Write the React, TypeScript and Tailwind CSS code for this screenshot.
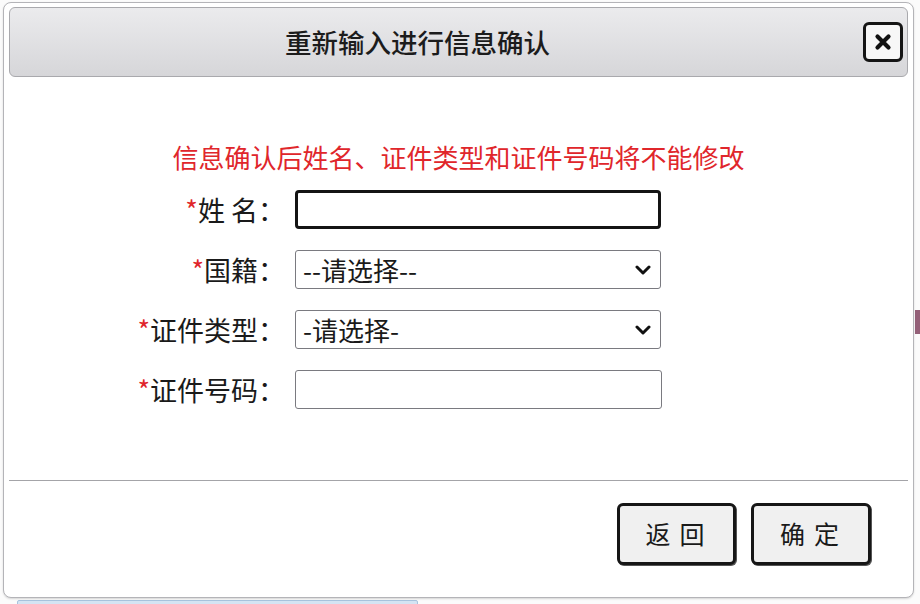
import { useState } from "react";

const font = { fontFamily: '"Microsoft YaHei", "Noto Sans CJK SC", "Noto Sans", sans-serif' };

function Chevron() {
  return (
    <svg width="16" height="12" viewBox="0 0 16 12" className="pointer-events-none absolute right-[9px] top-[13px]">
      <path d="M2 3 L8 9 L14 3" fill="none" stroke="#111" strokeWidth="3" strokeLinecap="round" strokeLinejoin="round" />
    </svg>
  );
}

function Label({ text }: { text: string }) {
  return (
    <div className="w-[276px] shrink-0 text-right text-[27px] leading-[39px] text-[#1a1a1a]">
      <span className="text-[#e0262b]">*</span>
      {text}
    </div>
  );
}

export default function App() {
  const [name, setName] = useState("");
  const [idNo, setIdNo] = useState("");

  return (
    <div className="relative h-[604px] w-[920px] overflow-hidden bg-[#fbfbfb]" style={font}>
      {/* sliver of the page behind the dialog */}
      <div className="absolute left-[915px] top-[310px] h-[24px] w-[5px] bg-[#7a3a58] opacity-80" />

      <div className="relative ml-[3px] mt-[2px] flex h-[596px] w-[911px] flex-col rounded-[8px] border border-[#b4b4b8] bg-white px-[5px] pb-[4px] pt-[4px] shadow-[0_1px_2px_rgba(0,0,0,0.15)]">
        {/* title bar */}
        <div className="flex h-[70px] items-center rounded-[6px] border border-[#a9a9ad] bg-gradient-to-b from-[#ebebed] to-[#d6d6d9] pr-[4px]">
          <div className="flex-1 pr-[38px] text-center text-[26.5px] font-medium text-[#1c1c1c]">
            重新输入进行信息确认
          </div>
          <button className="flex h-[40px] w-[40px] items-center justify-center rounded-[6px] border-[3px] border-[#151515] bg-[#f7f7f7]">
            <svg width="18" height="18" viewBox="0 0 18 18">
              <path d="M3.5 3.5 L14.5 14.5 M14.5 3.5 L3.5 14.5" stroke="#111" strokeWidth="4.2" strokeLinecap="round" />
            </svg>
          </button>
        </div>

        {/* body */}
        <div className="flex h-[403px] flex-col">
          <div className="mt-[65px] text-center text-[26px] leading-[30px] text-[#e0262b]">
            信息确认后姓名、证件类型和证件号码将不能修改
          </div>
          <div className="mt-[18px] flex flex-col gap-[21px]">
            <div className="flex items-center">
              <Label text="姓 名：" />
              <input
                value={name}
                onChange={(e) => setName(e.target.value)}
                className="ml-[10px] h-[39px] w-[366px] rounded-[4px] border-[3px] border-[#141414] bg-white px-2 text-[20px] outline-none"
              />
            </div>
            <div className="flex items-center">
              <Label text="国籍：" />
              <div className="relative ml-[10px] h-[39px] w-[366px] rounded-[3px] border border-[#7a7a80] bg-white">
                <div className="pl-[7px] text-[26px] leading-[37px] text-[#1a1a1a]">--请选择--</div>
                <Chevron />
              </div>
            </div>
            <div className="flex items-center">
              <Label text="证件类型：" />
              <div className="relative ml-[10px] h-[39px] w-[366px] rounded-[3px] border border-[#7a7a80] bg-white">
                <div className="pl-[7px] text-[26px] leading-[37px] text-[#1a1a1a]">-请选择-</div>
                <Chevron />
              </div>
            </div>
            <div className="flex items-center">
              <Label text="证件号码：" />
              <input
                value={idNo}
                onChange={(e) => setIdNo(e.target.value)}
                className="ml-[10px] h-[39px] w-[367px] rounded-[3px] border border-[#7a7a80] bg-white px-2 text-[20px] outline-none"
              />
            </div>
          </div>
        </div>

        <div className="h-px bg-[#a4a4a8]" />

        {/* footer */}
        <div className="flex justify-end gap-[15px] pr-[37px] pt-[22px]">
          <button className="h-[62px] w-[119px] rounded-[6px] border-[3px] border-[#161616] bg-[#f0f0f0] pl-[6px] text-[25px] tracking-[9px] text-[#1a1a1a] shadow-[1px_1px_0_#555]">
            返回
          </button>
          <button className="h-[62px] w-[120px] rounded-[6px] border-[3px] border-[#161616] bg-[#f0f0f0] pl-[6px] text-[25px] tracking-[9px] text-[#1a1a1a] shadow-[1px_1px_0_#555]">
            确定
          </button>
        </div>
      </div>

      {/* page strip below dialog */}
      <div className="ml-[17px] mt-[2px] h-[8px] w-[401px] rounded-t-[2px] border border-[#a9c4de] bg-[#d4e4f3]" />
    </div>
  );
}
